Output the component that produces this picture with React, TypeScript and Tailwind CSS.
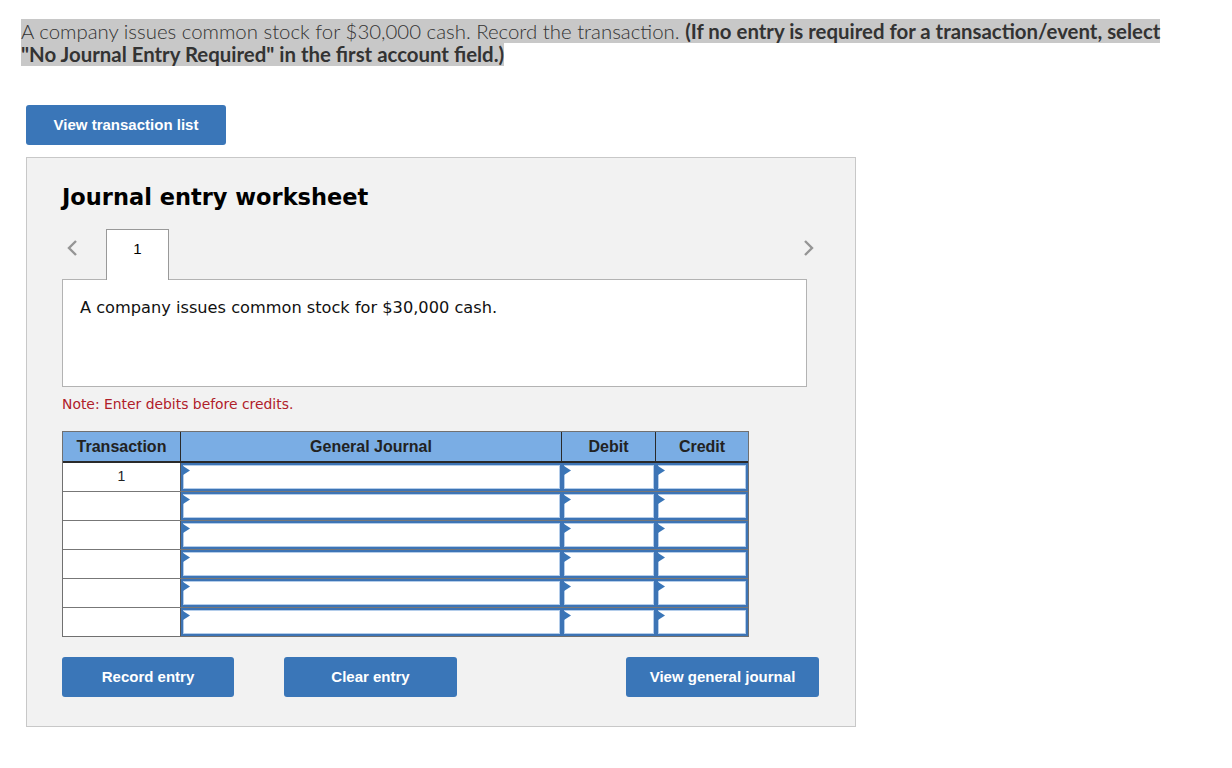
import React from "react";

function Tri() {
  return (
    <svg className="absolute left-0 top-[1px]" width="7" height="9" viewBox="0 0 7 9">
      <polygon points="0,0 7,4.5 0,9" fill="#3a76b8" />
    </svg>
  );
}

function InputCell() {
  return (
    <div className="relative h-full border-2 border-[#3d74b5] bg-white">
      <div className="h-full border border-[#b4cdea] bg-white" />
      <Tri />
    </div>
  );
}

function Btn({ children, w }: { children: React.ReactNode; w: string }) {
  return (
    <button
      className={`${w} h-[40px] rounded-[3px] bg-[#3a76b8] text-[15px] font-bold text-white`}
      style={{ fontFamily: '"Liberation Sans", Arial, sans-serif' }}
    >
      {children}
    </button>
  );
}

export default function App() {
  const rows = [0, 1, 2, 3, 4, 5];
  return (
    <div className="min-h-[768px] w-[1232px] bg-white pt-[20px]">
      <div
        className="pl-[21px] text-[20.4px] leading-[22.5px] text-[#333]"
        style={{ fontFamily: 'Lato, "Open Sans", sans-serif' }}
      >
        <span className="bg-[#c8c8c8] font-light">
          A company issues common stock for $30,000 cash. Record the transaction.{" "}
        </span>
        <span className="bg-[#c8c8c8] font-bold">
          (If no entry is required for a transaction/event, select
        </span>
        <br />
        <span className="bg-[#c8c8c8] font-bold">
          "No Journal Entry Required" in the first account field.)
        </span>
      </div>

      <div className="ml-[26px] mt-[40px]">
        <Btn w="w-[200px]">View transaction list</Btn>
      </div>

      <div
        className="ml-[26px] mt-[12px] h-[570px] w-[830px] border border-[#c8c8c8] bg-[#f2f2f2] px-[35px] pt-[24px]"
        style={{ fontFamily: '"DejaVu Sans", Verdana, sans-serif' }}
      >
        <h1 className="text-[22.5px] font-bold leading-[30px] text-black">Journal entry worksheet</h1>

        <div className="mt-[17px] flex w-[745px] items-end">
          <div className="flex h-[50px] w-[44px] items-center justify-start pb-[12px] pl-[4px]">
            <svg width="12" height="18" viewBox="0 0 12 18">
              <polyline points="10,2 3,9 10,16" fill="none" stroke="#959595" strokeWidth="2.4" />
            </svg>
          </div>
          <div
            className="relative -mb-px flex h-[51px] w-[63px] justify-center border border-b-0 border-[#999] bg-white pt-[8px] text-[15px] text-black"
            style={{ fontFamily: '"Liberation Sans", Arial, sans-serif' }}
          >
            1
          </div>
          <div className="flex-1" />
          <div className="-mr-[12px] flex h-[50px] w-[20px] items-center justify-center pb-[12px]">
            <svg width="12" height="18" viewBox="0 0 12 18">
              <polyline points="2,2 9,9 2,16" fill="none" stroke="#959595" strokeWidth="2.4" />
            </svg>
          </div>
        </div>
        <div className="h-[108px] w-[745px] border border-[#b3b3b3] bg-white px-[17px] pt-[16px] text-[16.2px] text-[#111]">
          A company issues common stock for $30,000 cash.
        </div>

        <div className="mt-[9px] text-[13.9px] leading-[17px] text-[#b0202a]">Note: Enter debits before credits.</div>

        <div
          className="mt-[18px] w-[687px] border border-[#707070]"
          style={{ fontFamily: '"Liberation Sans", Arial, sans-serif' }}
        >
          <div className="grid h-[31px] grid-cols-[118px_381px_94px_92px] border-b-2 border-[#2a2a2a] bg-[#7aade4] text-[16px] font-bold text-[#222]">
            <div className="flex items-center justify-center border-r border-[#2a2a2a]">Transaction</div>
            <div className="flex items-center justify-center border-r border-[#2a2a2a]">General Journal</div>
            <div className="flex items-center justify-center border-r border-[#2a2a2a]">Debit</div>
            <div className="flex items-center justify-center">Credit</div>
          </div>
          {rows.map((r) => (
            <div
              key={r}
              className={`grid grid-cols-[118px_381px_94px_92px] ${r < 5 ? "h-[29px] border-b border-[#777]" : "h-[28px]"}`}
            >
              <div className="flex items-center justify-center border-r border-[#555] bg-white pb-[2px] text-[14px] text-[#222]">
                {r === 0 ? "1" : ""}
              </div>
              <InputCell />
              <InputCell />
              <InputCell />
            </div>
          ))}
        </div>

        <div className="mt-[20px] flex w-[757px] items-center">
          <Btn w="w-[172px]">Record entry</Btn>
          <div className="w-[50px]" />
          <Btn w="w-[173px]">Clear entry</Btn>
          <div className="flex-1" />
          <Btn w="w-[193px]">View general journal</Btn>
        </div>
      </div>
    </div>
  );
}
